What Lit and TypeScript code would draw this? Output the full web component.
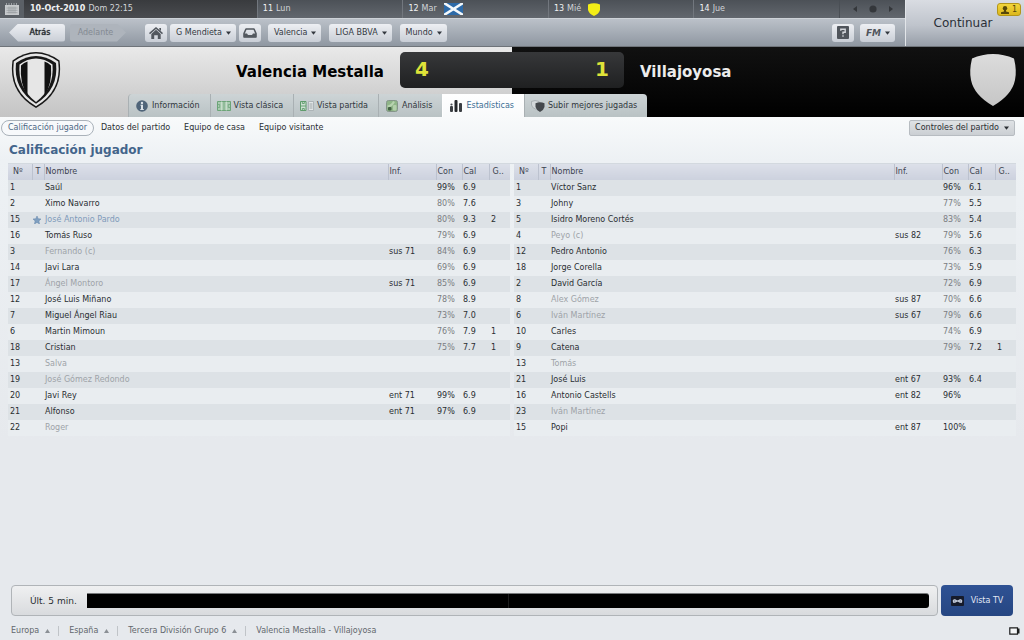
import { LitElement, html, svg, css, nothing } from "lit";
import { customElement, property } from "lit/decorators.js";
import { classMap } from "lit/directives/class-map.js";

interface Player {
  n: number;
  name: string;
  info?: string;
  con?: number;
  cal?: string;
  goals?: number;
  tone?: "off" | "star";
}

const home: Player[] = [
  { n: 1, name: "Saúl", con: 99, cal: "6.9" },
  { n: 2, name: "Ximo Navarro", con: 80, cal: "7.6" },
  { n: 15, name: "José Antonio Pardo", con: 80, cal: "9.3", goals: 2, tone: "star" },
  { n: 16, name: "Tomás Ruso", con: 79, cal: "6.9" },
  { n: 3, name: "Fernando (c)", info: "sus 71", con: 84, cal: "6.9", tone: "off" },
  { n: 14, name: "Javi Lara", con: 69, cal: "6.9" },
  { n: 17, name: "Ángel Montoro", info: "sus 71", con: 85, cal: "6.9", tone: "off" },
  { n: 12, name: "José Luis Miñano", con: 78, cal: "8.9" },
  { n: 7, name: "Miguel Ángel Riau", con: 73, cal: "7.0" },
  { n: 6, name: "Martin Mimoun", con: 76, cal: "7.9", goals: 1 },
  { n: 18, name: "Cristian", con: 75, cal: "7.7", goals: 1 },
  { n: 13, name: "Salva", tone: "off" },
  { n: 19, name: "José Gómez Redondo", tone: "off" },
  { n: 20, name: "Javi Rey", info: "ent 71", con: 99, cal: "6.9" },
  { n: 21, name: "Alfonso", info: "ent 71", con: 97, cal: "6.9" },
  { n: 22, name: "Roger", tone: "off" },
];

const away: Player[] = [
  { n: 1, name: "Víctor Sanz", con: 96, cal: "6.1" },
  { n: 3, name: "Johny", con: 77, cal: "5.5" },
  { n: 5, name: "Isidro Moreno Cortés", con: 83, cal: "5.4" },
  { n: 4, name: "Peyo (c)", info: "sus 82", con: 79, cal: "5.6", tone: "off" },
  { n: 12, name: "Pedro Antonio", con: 76, cal: "6.3" },
  { n: 18, name: "Jorge Corella", con: 73, cal: "5.9" },
  { n: 2, name: "David García", con: 72, cal: "6.9" },
  { n: 8, name: "Alex Gómez", info: "sus 87", con: 70, cal: "6.6", tone: "off" },
  { n: 6, name: "Iván Martínez", info: "sus 67", con: 79, cal: "6.6", tone: "off" },
  { n: 10, name: "Carles", con: 74, cal: "6.9" },
  { n: 9, name: "Catena", con: 79, cal: "7.2", goals: 1 },
  { n: 13, name: "Tomás", tone: "off" },
  { n: 21, name: "José Luis", info: "ent 67", con: 93, cal: "6.4" },
  { n: 16, name: "Antonio Castells", info: "ent 82", con: 96 },
  { n: 23, name: "Iván Martínez", tone: "off" },
  { n: 15, name: "Popi", info: "ent 87", con: 100 },
];

const icon = (w: number, h: number, body: unknown) =>
  html`<svg width=${w} height=${h} viewBox="0 0 ${w} ${h}" aria-hidden="true">${body}</svg>`;

const caret = icon(5, 4, svg`<path d="M0 .5h5L2.500 3.800z" fill="currentColor"/>`);
const up = icon(5, 4, svg`<path d="M0 4h5L2.500 0z" fill="currentColor"/>`);

const calendarIcon = icon(14, 12, svg`
  <path d="M0 2h14v10H0z" fill="#c6c9cc"/>
  <path d="M1.500 5h11M1.500 7.300h11M1.500 9.600h11M4 3.500v7M6 3.500v7M8 3.500v7M10 3.500v7" stroke="#8f9397" stroke-width=".6"/>
  <path d="M1.500 0v2M4 0v2M6.500 0v2M9 0v2M11.500 0v2" stroke="#9da1a5" stroke-width="1"/>`);

const flag = icon(19, 12, svg`
  <path d="M0 0h19v12H0z" fill="#2d6aa8"/>
  <path d="M0 0l19 12M19 0L0 12" stroke="#f4f8fb" stroke-width="2.600"/>`);

const yellowShield = icon(12, 13, svg`
  <path d="M0 1.500Q6-.8 12 1.500V7q-1 3.800-6 6-5-2.200-6-6z" fill="#f4ee17"/>`);

const homeIcon = icon(14, 12, svg`
  <path d="M7 0l7 6-1 1.200L7 2 1 7.200 0 6z" fill="#53585f"/>
  <path d="M2.300 7L7 2.800 11.700 7V12H8.800V8.200H5.200V12H2.300zM10.300 1H12v3l-1.700-1.500z" fill="#53585f"/>`);

const inboxIcon = icon(14, 10, svg`
  <path d="M3 1h8l2 4.500V9H1V5.500z" fill="none" stroke="#53585f" stroke-width="1.600" stroke-linejoin="round"/>
  <path d="M1 5.500h3l1 1.500h4l1-1.500h3V9.200H1z" fill="#53585f"/>`);

const infoIcon = icon(12, 12, svg`
  <circle cx="6" cy="6" r="5.800" fill="#4f6479"/>
  <circle cx="6" cy="3" r="1.200" fill="#dbe2e8"/>
  <path d="M4.500 4.800H7V9h.8v1H4.300V9H5V5.700h-.5z" fill="#dbe2e8"/>`);

const classicIcon = icon(14, 10, svg`
  <path d="M.5.500h13v9H.5z" fill="#a9cbb0" stroke="#6ba477"/>
  <path d="M4.700.5v9M9.300.5v9" stroke="#d4e5d7" stroke-width=".9"/>
  <path d="M7 .5v9M1 3.500h1.700v3H1M13 3.500h-1.700v3H13" fill="none" stroke="#6fa57b" stroke-width=".8"/>`);

const splitIcon = icon(14, 10, svg`
  <path d="M.5.500h5.500v9H.5z" fill="#cfe0d3" stroke="#5f9c6c"/>
  <path d="M1 5h5M2.300 1v1.500h2V1M2.300 9V7.500h2V9" fill="none" stroke="#5f9c6c" stroke-width=".9"/>
  <path d="M8.500.500h5v9h-5z" fill="#e1e5e6" stroke="#a3abae" stroke-width=".8"/>
  <path d="M9.500 3h3M9.500 5h3M9.500 7h3" stroke="#8e979b" stroke-width=".8"/>`);

const analysisIcon = icon(12, 12, svg`
  <rect x=".5" y=".5" width="11" height="11" rx="2" fill="#8fb588" stroke="#85958a"/>
  <path d="M1.500 6.500q4.500-.5 6.500-5" fill="none" stroke="#b8d3b0" stroke-width="2"/>
  <rect x="2" y="7" width="3.500" height="3.500" rx="1" fill="#436243"/>
  <rect x="7" y="5" width="3.500" height="5.500" rx="1" fill="#b3cfab"/>`);

const barsIcon = icon(12, 12, svg`
  <rect x="0" y="6" width="3" height="6" rx="1" fill="#3b3f43"/>
  <circle cx="1.500" cy="4.500" r="1.100" fill="#4b5055"/>
  <rect x="4.500" y="0" width="3" height="12" rx="1" fill="#25282b"/>
  <rect x="9" y="3" width="3" height="9" rx="1" fill="#3b3f43"/>`);

const shieldsIcon = icon(14, 12, svg`
  <path d="M.5 1.500Q4-.5 8 1.500V6Q7 9 4.500 9 1 8 .5 5z" fill="#d3d8da" stroke="#9aa1a5" stroke-width=".7"/>
  <path d="M4.500 3.300Q9 1 13.500 3.300V7q-1 3.500-4.500 5-3.500-1.500-4.500-5z" fill="#44484c"/>`);

const homeCrest = icon(52, 58, svg`
  <path d="M26 1Q38 1 49.500 9.500 54 41 26 57-2 41 2.500 9.500 14 1 26 1z" fill="#171717"/>
  <path d="M26 2.600Q37 2.600 48.200 10.500 52 40 26 55.200 0 40 3.800 10.500 15 2.600 26 2.600z" fill="#e6e6e6"/>
  <path d="M26 5Q36 5 46 12 49 38 26 52.800 3 38 6 12 16 5 26 5z" fill="#171717"/>
  <path d="M26 7.500Q35 7.500 42.500 13.500 44.500 37 26 51 7.500 37 9.500 13.500 17 7.500 26 7.500z" fill="#e6e6e6"/>
  <path d="M17.500 10.500v34Q9.500 33 11 14.500q3-2.800 6.500-4zM34.500 10.500v34Q42.500 33 41 14.500q-3-2.800-6.500-4z" fill="#111"/>`);

const awayCrest = icon(48, 54, svg`
  <defs><linearGradient id="steel" x2="0" y2="1"><stop stop-color="#dcdcdc"/><stop offset="1" stop-color="#c6c6c6"/></linearGradient></defs>
  <path d="M24 1Q35 1 45 5.500 48 18 46 27 43 42 24 53 5 42 2 27 0 18 3 5.500 13 1 24 1z" fill="url(#steel)"/>`);

const starIcon = icon(8, 8, svg`
  <path d="M4 0l1.200 2.700 2.800.3-2.100 1.900L6.500 8 4 6.400 1.500 8l.6-3.100L0 3l2.800-.3z" fill="#7f9fc0" stroke="#6587ab" stroke-width=".5"/>`);

const helpIcon = icon(12, 13, svg`
  <rect width="12" height="13" rx="1" fill="#50555c"/>
  <path d="M3.800 4.800V3.300h4.400v3H6v2M6 9.300v1.500" fill="none" stroke="#d3d6db" stroke-width="1.400"/>`);

const userIcon = icon(8, 8, svg`
  <circle cx="4" cy="2.200" r="2.200" fill="#57480a"/>
  <path d="M3 3.500h2v2l3 .8V8H0V6.300l3-.8z" fill="#57480a"/>`);

const tvIcon = icon(13, 10, svg`
  <rect width="13" height="10" rx="1" fill="#161b2b"/>
  <path d="M2 4l1.500-1L5.500 4 6.500 4.500 7.500 4l2-1L11 4v2.500L9.500 7l-2-1-1-.5-1 .5-2 1L2 6.500z" fill="#e7ebf3"/>
  <path d="M3.700 3v4M9.300 3v4M1 5h11" stroke="#6d7894" stroke-width=".6"/>`);

const prevIcon = icon(4, 6, svg`<path d="M4 0v6L0 3z" fill="#34373b"/>`);
const nextIcon = icon(4, 6, svg`<path d="M0 0v6l4-3z" fill="#34373b"/>`);
const dotIcon = icon(8, 8, svg`<circle cx="4" cy="4" r="3.600" fill="#34373b"/>`);

const batteryIcon = icon(11, 8, svg`
  <path d="M.8.800h7.700v6.400H.8z" fill="#f4f5f6" stroke="#1b1c1d" stroke-width="1.200"/>
  <path d="M8.500 1.500H10.500v5h-2z" fill="#1b1c1d"/>`);

const reset = css`
  * { box-sizing: border-box; }
  svg { display: block; flex: none; }
  button, a {
    font: inherit;
    color: inherit;
    text-decoration: none;
    margin: 0;
    padding: 0;
    border: 0;
    background: none;
    white-space: nowrap;
  }
`;

@customElement("player-table")
export class PlayerTable extends LitElement {
  @property({ attribute: false }) players: Player[] = [];
  @property() label = "";

  static styles = [reset, css`
    :host { display: block; }
    .grid {
      width: 100%;
      table-layout: fixed;
      border-collapse: collapse;
    }
    .c-num { width: 24px; }
    .c-type { width: 12px; }
    .c-inf { width: 48px; }
    .c-con { width: 26px; }
    .c-cal { width: 27px; }
    .c-goals { width: 21px; }
    th, td {
      height: 16px;
      padding: 0 0 0 1px;
      line-height: 14px;
      text-align: left;
      font-weight: normal;
      white-space: nowrap;
      overflow: hidden;
    }
    th {
      color: #3d4450;
      background: linear-gradient(#dce0e9, #ccd1de);
      border-left: 1px solid #bcc2cf;
    }
    th:first-child { border-left: 0; padding-left: 5px; }
    th.type, th.goals { padding-left: 3px; }
    td:first-child, td:last-child { padding-left: 2px; }
    tbody tr:nth-child(odd) { background: #dde2e6; }
    tbody tr:nth-child(even) { background: #e9edf0; }
    .dim { color: #7b7d82; }
    .off { color: #9ea3a8; }
    .star { color: #7e9aba; }
  `];

  render() {
    return html`
      <table class="grid" aria-label=${this.label}>
        <colgroup>
          <col class="c-num"><col class="c-type"><col><col class="c-inf">
          <col class="c-con"><col class="c-cal"><col class="c-goals">
        </colgroup>
        <thead>
          <tr>
            <th>Nº</th><th class="type">T</th><th>Nombre</th><th>Inf.</th>
            <th>Con</th><th>Cal</th><th class="goals">G..</th>
          </tr>
        </thead>
        <tbody>
          ${this.players.map((p) => html`
            <tr>
              <td>${p.n}</td>
              <td>${p.tone === "star" ? starIcon : nothing}</td>
              <td class=${p.tone ?? ""}>${p.name}</td>
              <td>${p.info}</td>
              <td class=${classMap({ dim: (p.con ?? 0) < 90 })}>${p.con ? `${p.con}%` : nothing}</td>
              <td>${p.cal}</td>
              <td>${p.goals}</td>
            </tr>`)}
        </tbody>
      </table>`;
  }
}

@customElement("app-root")
export class AppRoot extends LitElement {
  static styles = [reset, css`
    :host {
      display: flex;
      flex-direction: column;
      min-height: 100vh;
      box-sizing: border-box;
      font: 8px/12px "DejaVu Sans", sans-serif;
      color: #2a2e32;
      background: linear-gradient(#f8fafb 117px, #edf1f4 160px, #e6e9ed 440px);
    }

    .top {
      display: grid;
      grid-template-columns: 1fr 119px;
      border-bottom: 1px solid #6f747a;
    }
    .days {
      display: grid;
      grid-template-columns: 24px 8fr 5fr 5fr 5fr 5fr 66px;
      height: 18px;
      color: #d2d5d8;
      background: linear-gradient(#4c5157, #62676e);
    }
    .day {
      display: flex;
      align-items: center;
      gap: 3px;
      padding-left: 5px;
      border-left: 1px solid #72777e;
      white-space: nowrap;
    }
    .day svg { margin-left: 4px; }
    .day b { font-weight: normal; color: #f1f2f3; }
    .day.today {
      padding-left: 6px;
      border-left: 0;
      background: linear-gradient(#393b3e, #4a4c50);
    }
    .today b { font-weight: bold; }
    .cal {
      display: grid;
      place-items: center;
      background: #5b6066;
    }
    .steps {
      display: flex;
      align-items: center;
      justify-content: center;
      gap: 12px;
      border-left: 1px solid #4a4f55;
    }

    .nav {
      display: flex;
      align-items: center;
      height: 28px;
      padding: 0 10px 0 9px;
      background: linear-gradient(#bbc1c9, #8f97a1);
      border-top: 1px solid #cdd2d8;
    }
    .btn {
      display: flex;
      align-items: center;
      justify-content: center;
      gap: 4px;
      height: 18px;
      padding: 0 5px 0 6px;
      border-radius: 3px;
      color: #33383f;
      background: linear-gradient(#edeff3, #c9ced6);
    }
    .square { width: 22px; padding: 0; }
    .back, .forward { width: 56px; padding: 0; }
    .back {
      padding-left: 6px;
      color: #1f2329;
      text-shadow: 0 0 1px #1f2329;
      border-radius: 9px 3px 3px 9px;
      clip-path: polygon(0 50%, 9px 0, 100% 0, 100% 100%, 9px 100%);
    }
    .forward {
      margin: 0 19px 0 5px;
      padding-right: 5px;
      color: #848a93;
      background: #aeb4bc;
      clip-path: polygon(0 0, 47px 0, 100% 50%, 47px 100%, 0 100%);
    }
    .group { display: flex; gap: 3px; margin-right: 7px; }
    .menus { display: flex; gap: 8px; }
    .right { display: flex; gap: 6px; margin-left: auto; }
    .fm { font-style: italic; font-weight: bold; font-size: 9px; color: #50555c; }

    .continue {
      display: flex;
      align-items: center;
      justify-content: center;
      position: relative;
      padding-right: 4px;
      font-size: 12px;
      color: #2b3038;
      background: linear-gradient(#d9dce2, #bfc4cc 55%, #979ea8);
      border-left: 1px solid #e2e5e9;
    }
    .badge {
      position: absolute;
      top: 3px;
      right: 3px;
      display: flex;
      align-items: center;
      gap: 3px;
      height: 13px;
      padding: 0 3px;
      border: 1px solid #b39518;
      border-radius: 3px;
      font-size: 8px;
      color: #57480a;
      background: linear-gradient(#f2d53c, #dcb71c);
    }

    .match {
      display: grid;
      grid-template-columns: 128px 1fr 128px;
      height: 70px;
      background:
        linear-gradient(#111, #000) right / 50% 100% no-repeat,
        linear-gradient(#e9e9e9, #c4c4c4);
    }
    .crest { padding: 4px 0 0 10px; }
    .crest-away { padding: 6px 7px 0 0; justify-self: end; }
    .centre { display: flex; flex-direction: column; justify-content: space-between; }
    .score-line {
      display: grid;
      grid-template-columns: 1fr 224px 1fr;
      gap: 16px;
      align-items: center;
      padding-top: 5px;
      font-weight: bold;
      font-size: 15px;
      line-height: 20px;
    }
    .team { margin: 4px 0 0; font-size: 15px; white-space: nowrap; }
    .team-home { text-align: right; color: #000; }
    .team-away { color: #ececec; }
    .score {
      display: flex;
      justify-content: space-between;
      height: 36px;
      padding: 0 15px 3px;
      align-items: center;
      border-radius: 5px;
      font-size: 20px;
      color: #dfe339;
      background: linear-gradient(#37383a, #1f2021);
    }
    .tabs { display: flex; }
    .tab {
      display: flex;
      align-items: center;
      gap: 3px;
      height: 23px;
      padding: 0 10px 0 6px;
      border-left: 1px solid #a9b0b3;
      color: #30363c;
      background: linear-gradient(#cdd4d6, #b9c2c4);
    }
    .tab:first-child { border-top-left-radius: 4px; }
    .tab:last-child { border-top-right-radius: 4px; }
    .tab-icon { display: grid; place-items: center; width: 14px; }
    .tab.on { color: #3d6f94; background: linear-gradient(#fff, #f8fafb); border-color: #fff; }

    .sub {
      display: flex;
      align-items: center;
      justify-content: space-between;
      padding: 3px 9px 0 1px;
    }
    .links { display: flex; }
    .link {
      padding: 1px 6px;
      border: 1px solid transparent;
      border-radius: 8px;
    }
    .link.on { color: #4c6684; border-color: #aab2ba; background: #f7f9fb; }
    .controls {
      display: flex;
      align-items: center;
      gap: 5px;
      height: 16px;
      padding: 0 5px;
      border: 1px solid #b7bcc1;
      border-radius: 2px;
      background: linear-gradient(#dfe2e5, #cbcfd3);
    }

    .title {
      margin: 5px 8px 0;
      padding: 0 1px 4px;
      border-bottom: 1px solid #d3d9df;
      font-size: 12px;
      line-height: 18px;
      color: #43658b;
    }
    .tables {
      display: grid;
      grid-template-columns: 1fr 1fr;
      gap: 4px;
      padding: 0 8px;
    }

    .bottom {
      display: flex;
      gap: 3px;
      margin-top: auto;
      padding: 16px 11px 0;
    }
    .momentum {
      flex: 1;
      display: flex;
      align-items: center;
      gap: 10px;
      height: 31px;
      padding: 0 8px 0 18px;
      border: 1px solid #b0b4b8;
      border-radius: 4px;
      font-size: 9px;
      background: linear-gradient(#eff0f1, #d9dbde);
    }
    .track {
      flex: 1;
      height: 15px;
      border-radius: 0 3px 3px 0;
      border-top: 1px solid #77797b;
      background: linear-gradient(90deg, transparent 50%, #3a3a3a 50%, transparent calc(50% + 1px)) #000;
    }
    .tv {
      display: flex;
      align-items: center;
      justify-content: center;
      gap: 7px;
      width: 72px;
      border-radius: 4px;
      color: #e3e9f4;
      background: linear-gradient(#2f5294, #264682);
    }
    .crumbs {
      display: flex;
      align-items: center;
      height: 24px;
      padding: 6px 4px 0 11px;
      color: #62676c;
    }
    .crumb {
      display: flex;
      align-items: center;
      gap: 6px;
      margin-right: 10px;
      padding-right: 8px;
      line-height: 10px;
      border-right: 1px solid #c0c4c8;
    }
    .crumb svg { color: #8b9095; }
    .power { margin-left: auto; }
  `];

  private menu(label: string) {
    return html`<button class="btn" aria-haspopup="menu">${label}${caret}</button>`;
  }

  private tab(label: string, glyph: unknown, on = false) {
    return html`
      <button class=${classMap({ tab: true, on })} role="tab" aria-selected=${on}>
        <span class="tab-icon">${glyph}</span>${label}
      </button>`;
  }

  render() {
    return html`
      <header class="top">
        <div>
          <div class="days">
            <div class="cal">${calendarIcon}</div>
            <div class="day today"><b>10-Oct-2010</b>Dom 22:15</div>
            <div class="day"><b>11</b>Lun</div>
            <div class="day"><b>12</b>Mar ${flag}</div>
            <div class="day"><b>13</b>Mié ${yellowShield}</div>
            <div class="day"><b>14</b>Jue</div>
            <div class="steps">
              <button aria-label="Anterior">${prevIcon}</button>
              <button aria-label="Hoy">${dotIcon}</button>
              <button aria-label="Siguiente">${nextIcon}</button>
            </div>
          </div>
          <nav class="nav">
            <button class="btn back">Atrás</button>
            <button class="btn forward" disabled>Adelante</button>
            <div class="group">
              <button class="btn square" aria-label="Inicio">${homeIcon}</button>
              ${this.menu("G Mendieta")}
              <button class="btn square" aria-label="Mensajes">${inboxIcon}</button>
            </div>
            <div class="menus">
              ${["Valencia", "LIGA BBVA", "Mundo"].map((m) => this.menu(m))}
            </div>
            <div class="right">
              <button class="btn square" aria-label="Ayuda">${helpIcon}</button>
              <button class="btn" aria-haspopup="menu"><span class="fm">FM</span>${caret}</button>
            </div>
          </nav>
        </div>
        <button class="continue">
          Continuar
          <span class="badge">${userIcon}1</span>
        </button>
      </header>

      <section class="match">
        <div class="crest">${homeCrest}</div>
        <div class="centre">
          <div class="score-line">
            <h1 class="team team-home">Valencia Mestalla</h1>
            <div class="score"><span>4</span><span>1</span></div>
            <h1 class="team team-away">Villajoyosa</h1>
          </div>
          <div class="tabs" role="tablist">
            ${this.tab("Información", infoIcon)}
            ${this.tab("Vista clásica", classicIcon)}
            ${this.tab("Vista partida", splitIcon)}
            ${this.tab("Análisis", analysisIcon)}
            ${this.tab("Estadísticas", barsIcon, true)}
            ${this.tab("Subir mejores jugadas", shieldsIcon)}
          </div>
        </div>
        <div class="crest-away">${awayCrest}</div>
      </section>

      <div class="sub">
        <nav class="links">
          <a class="link on" href="#calificacion">Calificación jugador</a>
          <a class="link" href="#datos">Datos del partido</a>
          <a class="link" href="#casa">Equipo de casa</a>
          <a class="link" href="#visitante">Equipo visitante</a>
        </nav>
        <button class="controls" aria-haspopup="menu">Controles del partido${caret}</button>
      </div>

      <main>
        <h2 class="title">Calificación jugador</h2>
        <div class="tables">
          <player-table label="Valencia Mestalla" .players=${home}></player-table>
          <player-table label="Villajoyosa" .players=${away}></player-table>
        </div>
      </main>

      <div class="bottom">
        <div class="momentum">Últ. 5 min.<div class="track"></div></div>
        <button class="tv">${tvIcon}Vista TV</button>
      </div>
      <nav class="crumbs">
        <a class="crumb" href="#europa">Europa ${up}</a>
        <a class="crumb" href="#espana">España ${up}</a>
        <a class="crumb" href="#tercera">Tercera División Grupo 6 ${up}</a>
        <a href="#partido">Valencia Mestalla - Villajoyosa</a>
        <span class="power">${batteryIcon}</span>
      </nav>`;
  }
}
